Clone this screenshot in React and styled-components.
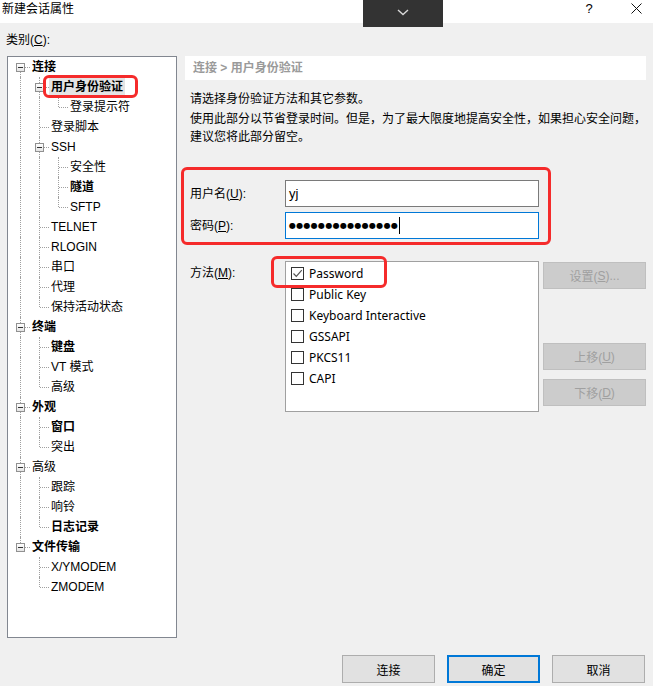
import React from 'react';
import styled, { createGlobalStyle, css } from 'styled-components';

const GlobalStyle = createGlobalStyle`
    html, body {
        margin: 0;
        padding: 0;
        background: #f0f0f0;
    }
    body {
        font-family: "Liberation Sans", "Noto Sans CJK SC", sans-serif;
        font-size: 12px;
        color: #000;
    }
    * {
        box-sizing: border-box;
    }
`;

const treeData = [
    { label: '连接', depth: 0, bold: true },
    { label: '用户身份验证', depth: 1, bold: true, selected: true },
    { label: '登录提示符', depth: 2 },
    { label: '登录脚本', depth: 1 },
    { label: 'SSH', depth: 1 },
    { label: '安全性', depth: 2 },
    { label: '隧道', depth: 2, bold: true },
    { label: 'SFTP', depth: 2 },
    { label: 'TELNET', depth: 1 },
    { label: 'RLOGIN', depth: 1 },
    { label: '串口', depth: 1 },
    { label: '代理', depth: 1 },
    { label: '保持活动状态', depth: 1 },
    { label: '终端', depth: 0, bold: true },
    { label: '键盘', depth: 1, bold: true },
    { label: 'VT 模式', depth: 1 },
    { label: '高级', depth: 1 },
    { label: '外观', depth: 0, bold: true },
    { label: '窗口', depth: 1, bold: true },
    { label: '突出', depth: 1 },
    { label: '高级', depth: 0 },
    { label: '跟踪', depth: 1 },
    { label: '响铃', depth: 1 },
    { label: '日志记录', depth: 1, bold: true },
    { label: '文件传输', depth: 0, bold: true },
    { label: 'X/YMODEM', depth: 1 },
    { label: 'ZMODEM', depth: 1 },
];

// does item i have a later sibling at its own depth?
const hasNextSibling = (i) => {
    const d = treeData[i].depth;
    for (let j = i + 1; j < treeData.length; j++) {
        if (treeData[j].depth < d) return false;
        if (treeData[j].depth === d) return true;
    }
    return false;
};

const buildRows = () => treeData.map((item, i) => {
    const cells = [];
    for (let k = 0; k < item.depth; k++) {
        let a = i - 1;
        while (a >= 0 && treeData[a].depth !== k) a--;
        cells.push({ pipe: hasNextSibling(a) });
    }
    const next = treeData[i + 1];
    cells.push({
        own: true,
        top: i > 0,
        bottom: hasNextSibling(i),
        expander: !!next && next.depth > item.depth,
    });
    return { ...item, cells };
});

const methods = [
    { label: 'Password', checked: true },
    { label: 'Public Key' },
    { label: 'Keyboard Interactive' },
    { label: 'GSSAPI' },
    { label: 'PKCS11' },
    { label: 'CAPI' },
];

const App = () => {
    const rows = buildRows();

    return (
        <>
            <GlobalStyle />
            <Window>
                <TitleBar>
                    <Title>新建会话属性</Title>
                    <TitleButtons>
                        <HelpButton>?</HelpButton>
                        <CloseButton>
                            <svg width='11' height='11' viewBox='0 0 11 11'>
                                <path d='M0.5 0.5 L10.5 10.5 M10.5 0.5 L0.5 10.5' stroke='#111' strokeWidth='1' fill='none' />
                            </svg>
                        </CloseButton>
                    </TitleButtons>
                    <RemoteTab>
                        <svg width='12' height='7' viewBox='0 0 12 7'>
                            <path d='M1 1 L6 5.5 L11 1' stroke='#d8d8d8' strokeWidth='1.4' fill='none' />
                        </svg>
                    </RemoteTab>
                </TitleBar>

                <Body>
                    <CategoryLabel>类别(<u>C</u>):</CategoryLabel>
                    <Columns>
                        <TreePanel>
                            {rows.map((row, i) => (
                                <TreeRow key={i}>
                                    {row.cells.map((c, k) => (
                                        <TreeCell
                                            key={k}
                                            $pipe={c.pipe}
                                            $own={c.own}
                                            $top={c.top}
                                            $bottom={c.bottom}
                                        >
                                            {c.expander && <Expander />}
                                        </TreeCell>
                                    ))}
                                    <TreeLabel $bold={row.bold} $selected={row.selected}>
                                        {row.label}
                                        {row.selected && <SelectedMark />}
                                    </TreeLabel>
                                </TreeRow>
                            ))}
                        </TreePanel>

                        <RightPanel>
                            <Breadcrumb>连接 &gt; 用户身份验证</Breadcrumb>
                            <Description>
                                <p>请选择身份验证方法和其它参数。</p>
                                <p>
                                    使用此部分以节省登录时间。但是，为了最大限度地提高安全性，如果担心安全问题，
                                    <br />
                                    建议您将此部分留空。
                                </p>
                            </Description>

                            <CredentialGrid>
                                <FieldLabel>用户名(<u>U</u>):</FieldLabel>
                                <TextBox>yj</TextBox>
                                <FieldLabel>密码(<u>P</u>):</FieldLabel>
                                <TextBox $focused>
                                    <PasswordDots>●●●●●●●●●●●●●●●</PasswordDots>
                                    <Caret />
                                </TextBox>
                                <FormMark />
                            </CredentialGrid>

                            <MethodSection>
                                <MethodLabel>方法(<u>M</u>):</MethodLabel>
                                <MethodList>
                                    {methods.map((m) => (
                                        <MethodItem key={m.label}>
                                            <CheckBox>
                                                {m.checked && (
                                                    <svg width='11' height='11' viewBox='0 0 11 11'>
                                                        <path d='M1.5 5.5 L4.3 8.3 L9.8 2.2' stroke='#555' strokeWidth='1.2' fill='none' />
                                                    </svg>
                                                )}
                                            </CheckBox>
                                            {m.label}
                                        </MethodItem>
                                    ))}
                                </MethodList>
                                <SideButtons>
                                    <SideButton>设置(<u>S</u>)...</SideButton>
                                    <SideButton $gap={54}>上移(<u>U</u>)</SideButton>
                                    <SideButton $gap={9}>下移(<u>D</u>)</SideButton>
                                </SideButtons>
                                <PasswordMark />
                            </MethodSection>
                        </RightPanel>
                    </Columns>

                    <Footer>
                        <DialogButton>连接</DialogButton>
                        <DialogButton $default>确定</DialogButton>
                        <DialogButton>取消</DialogButton>
                    </Footer>
                </Body>
            </Window>
        </>
    );
};

const Window = styled.div`
    width: 653px;
    height: 686px;
    background: #f0f0f0;
    display: flex;
    flex-direction: column;
    overflow: hidden;
`;

const TitleBar = styled.div`
    position: relative;
    height: 23px;
    background: #fff;
    display: flex;
    align-items: center;
    justify-content: space-between;
    padding-left: 2px;
    flex-shrink: 0;
`;

const Title = styled.span`
    font-size: 12px;
    line-height: 14px;
    margin-top: -6px;
`;

const TitleButtons = styled.div`
    display: flex;
    align-items: center;
    margin-top: -6px;
`;

const HelpButton = styled.span`
    width: 40px;
    text-align: center;
    font-family: "Liberation Sans", sans-serif;
    font-size: 13px;
    margin-right: 7px;
`;

const CloseButton = styled.span`
    width: 40px;
    display: flex;
    justify-content: center;
    margin-right: -3px;
`;

const RemoteTab = styled.div`
    position: absolute;
    left: 363px;
    top: 0;
    width: 80px;
    height: 27px;
    background: #333333;
    display: flex;
    align-items: flex-start;
    justify-content: center;
    padding-top: 9px;
    z-index: 3;
`;

const Body = styled.div`
    flex: 1;
    display: flex;
    flex-direction: column;
    padding: 0 7px;
`;

const CategoryLabel = styled.div`
    height: 33px;
    padding-top: 10px;
    line-height: 14px;
    padding-left: 0;
    margin-left: -1px;
`;

const Columns = styled.div`
    display: flex;
    gap: 8px;
    height: 582px;
`;

const TreePanel = styled.div`
    width: 170px;
    height: 100%;
    background: #fff;
    border: 1px solid #828790;
    padding-left: 3px;
`;

const TreeRow = styled.div`
    display: flex;
    height: 20px;
    line-height: 20px;
`;

const dotted = '1px dotted #a0a0a0';

const TreeCell = styled.div`
    position: relative;
    width: 19px;
    flex-shrink: 0;

    ${props => props.$pipe && css`
        &::before {
            content: '';
            position: absolute;
            left: 9px;
            top: 0;
            bottom: 0;
            border-left: ${dotted};
        }
    `}

    ${props => props.$own && css`
        &::before {
            content: '';
            position: absolute;
            left: 9px;
            top: ${props.$top ? '0' : '10px'};
            bottom: ${props.$bottom ? '0' : '10px'};
            border-left: ${dotted};
        }
        &::after {
            content: '';
            position: absolute;
            left: 10px;
            right: 0;
            top: 10px;
            border-top: ${dotted};
        }
    `}
`;

const Expander = styled.span`
    position: absolute;
    left: 5px;
    top: 6px;
    width: 9px;
    height: 9px;
    border: 1px solid #919191;
    background: linear-gradient(#ffffff, #e4e4e4);
    z-index: 1;

    &::after {
        content: '';
        position: absolute;
        left: 1px;
        top: 3px;
        width: 5px;
        height: 1px;
        background: #333;
    }
`;

const TreeLabel = styled.span`
    position: relative;
    padding: 0 2px;
    white-space: nowrap;
    font-weight: ${props => (props.$bold ? 700 : 400)};
    ${props => props.$selected && css`
        background: #e4e4e4;
    `}
`;

const Mark = styled.span`
    position: absolute;
    border: 3px solid #f52b2b;
    border-radius: 6px;
    pointer-events: none;
    z-index: 4;
`;

const SelectedMark = styled(Mark)`
    left: -6px;
    top: -2px;
    width: 95px;
    height: 23px;
`;

const RightPanel = styled.div`
    width: 461px;
    display: flex;
    flex-direction: column;
`;

const Breadcrumb = styled.div`
    height: 24px;
    background: #fff;
    padding-left: 8px;
    line-height: 24px;
    font-weight: 700;
    color: #9a9a9a;
`;

const Description = styled.div`
    margin-top: 10px;
    padding-left: 5px;
    line-height: 18px;
    white-space: nowrap;

    p {
        margin: 0;
    }
    p + p {
        margin-top: 2px;
    }
`;

const CredentialGrid = styled.div`
    position: relative;
    margin-top: 34px;
    display: grid;
    grid-template-columns: 100px 254px;
    grid-auto-rows: 27px;
    row-gap: 5px;
`;

const FieldLabel = styled.div`
    padding-left: 5px;
    align-self: center;
    line-height: 14px;
`;

const TextBox = styled.div`
    display: flex;
    align-items: center;
    background: #fff;
    border: 1px solid ${props => (props.$focused ? '#0078d7' : '#7a7a7a')};
    padding-left: 3px;
    font-size: 13px;
`;

const PasswordDots = styled.span`
    font-family: "DejaVu Sans", sans-serif;
    font-size: 8px;
    letter-spacing: 0.3px;
`;

const Caret = styled.span`
    width: 1px;
    height: 17px;
    background: #000;
    margin-left: 1px;
`;

const FormMark = styled(Mark)`
    left: -4px;
    top: -13px;
    width: 370px;
    height: 78px;
`;

const MethodSection = styled.div`
    position: relative;
    margin-top: 22px;
    display: grid;
    grid-template-columns: 100px 254px 107px;
    align-items: start;
`;

const MethodLabel = styled.div`
    padding-left: 5px;
    padding-top: 5px;
    line-height: 14px;
`;

const MethodList = styled.div`
    height: 151px;
    background: #fff;
    border: 1px solid #a0a0a0;
    padding: 1px 0 0 5px;
`;

const MethodItem = styled.div`
    display: flex;
    align-items: center;
    height: 21px;
    font-family: "Noto Sans", "Liberation Sans", sans-serif;
    font-size: 12px;
`;

const CheckBox = styled.span`
    width: 13px;
    height: 13px;
    border: 1px solid #333;
    background: #fff;
    margin-right: 5px;
    display: flex;
    align-items: center;
    justify-content: center;
`;

const SideButtons = styled.div`
    display: flex;
    flex-direction: column;
    padding-left: 4px;
    padding-top: 1px;
`;

const SideButton = styled.div`
    height: 27px;
    margin-top: ${props => props.$gap || 0}px;
    background: #cccccc;
    border: 1px solid #bfbfbf;
    color: #a0a0a0;
    display: flex;
    align-items: center;
    justify-content: center;
`;

const PasswordMark = styled(Mark)`
    left: 86px;
    top: -5px;
    width: 116px;
    height: 32px;
`;

const Footer = styled.div`
    display: flex;
    justify-content: flex-end;
    gap: 12px;
    padding-top: 17px;
    padding-right: 1px;
`;

const DialogButton = styled.div`
    width: 93px;
    height: 28px;
    background: #e1e1e1;
    border: 1px solid #adadad;
    display: flex;
    align-items: center;
    justify-content: center;
    ${props => props.$default && css`
        border: 2px solid #0078d7;
    `}
`;

export default App;
